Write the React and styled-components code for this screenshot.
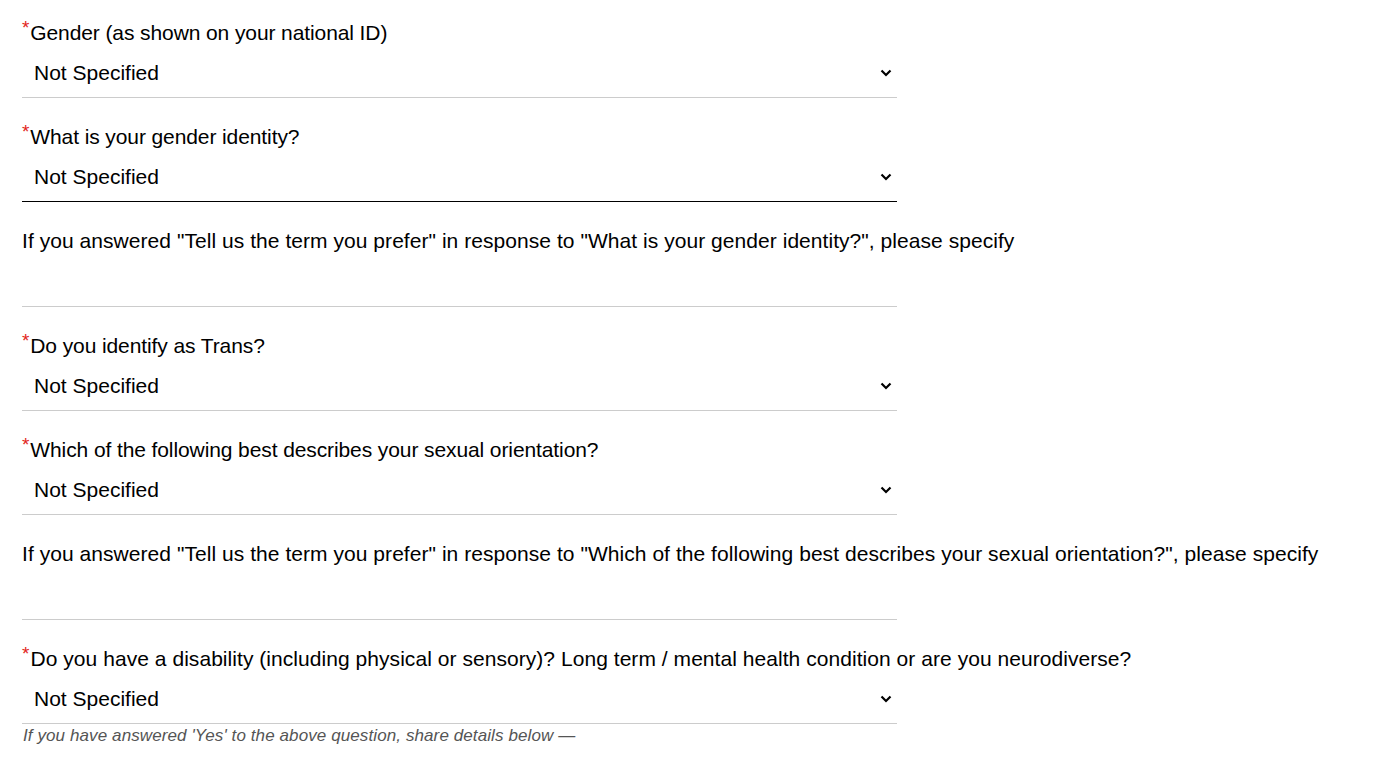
import React from "react";
import styled, { createGlobalStyle } from "styled-components";

const Global = createGlobalStyle`
  html, body { margin: 0; padding: 0; background: #ffffff; }
  body { font-family: "Liberation Sans", Arial, sans-serif; color: #000; }
`;

const Form = styled.div`
  padding: 21px 0 0 22px;
  width: 875px;
  display: flex;
  flex-direction: column;
`;

const Field = styled.div`
  display: flex;
  flex-direction: column;
  margin-bottom: ${(p) => (p.$last ? "0" : "27px")};
`;

const Label = styled.div`
  font-size: 21px;
  line-height: 24px;
  height: 24px;
  margin-bottom: 4px;
  white-space: nowrap;
  letter-spacing: ${(p) => (p.$long ? "0.05px" : "-0.1px")};
`;

const Req = styled.span`
  color: #e2231a;
  font-size: 19px;
  display: inline-block;
  vertical-align: top;
  line-height: 14px;
  margin-right: 1px;
`;

const SelectBox = styled.div`
  height: 49px;
  box-sizing: border-box;
  display: flex;
  align-items: center;
  justify-content: space-between;
  padding: 0 5px 0 12px;
  border-bottom: 1px solid ${(p) => (p.$focused ? "#000" : "#ccc")};
  font-size: 21px;
`;

const TextBox = styled.div`
  height: 50px;
  box-sizing: border-box;
  border-bottom: 1px solid #ccc;
`;

const Help = styled.div`
  font-size: 17px;
  font-style: italic;
  color: #555;
  line-height: 20px;
  margin-top: 2px;
  padding-left: 1px;
  letter-spacing: 0.1px;
`;

const Chevron = () => (
  <svg width="12" height="8" viewBox="0 0 12 8">
    <path d="M1.5 1.5 L6 6 L10.5 1.5" fill="none" stroke="#000" strokeWidth="2.2" />
  </svg>
);

const Select = ({ focused }) => (
  <SelectBox $focused={focused}>
    <span>Not Specified</span>
    <Chevron />
  </SelectBox>
);

export default function App() {
  return (
    <>
      <Global />
      <Form>
        <Field>
          <Label><Req>*</Req>Gender (as shown on your national ID)</Label>
          <Select />
        </Field>
        <Field>
          <Label><Req>*</Req>What is your gender identity?</Label>
          <Select focused />
        </Field>
        <Field>
          <Label $long>If you answered "Tell us the term you prefer" in response to "What is your gender identity?", please specify</Label>
          <TextBox />
        </Field>
        <Field>
          <Label><Req>*</Req>Do you identify as Trans?</Label>
          <Select />
        </Field>
        <Field>
          <Label><Req>*</Req>Which of the following best describes your sexual orientation?</Label>
          <Select />
        </Field>
        <Field>
          <Label $long>If you answered "Tell us the term you prefer" in response to "Which of the following best describes your sexual orientation?", please specify</Label>
          <TextBox />
        </Field>
        <Field $last>
          <Label $long><Req>*</Req>Do you have a disability (including physical or sensory)? Long term / mental health condition or are you neurodiverse?</Label>
          <Select />
          <Help>If you have answered 'Yes' to the above question, share details below —</Help>
        </Field>
      </Form>
    </>
  );
}
